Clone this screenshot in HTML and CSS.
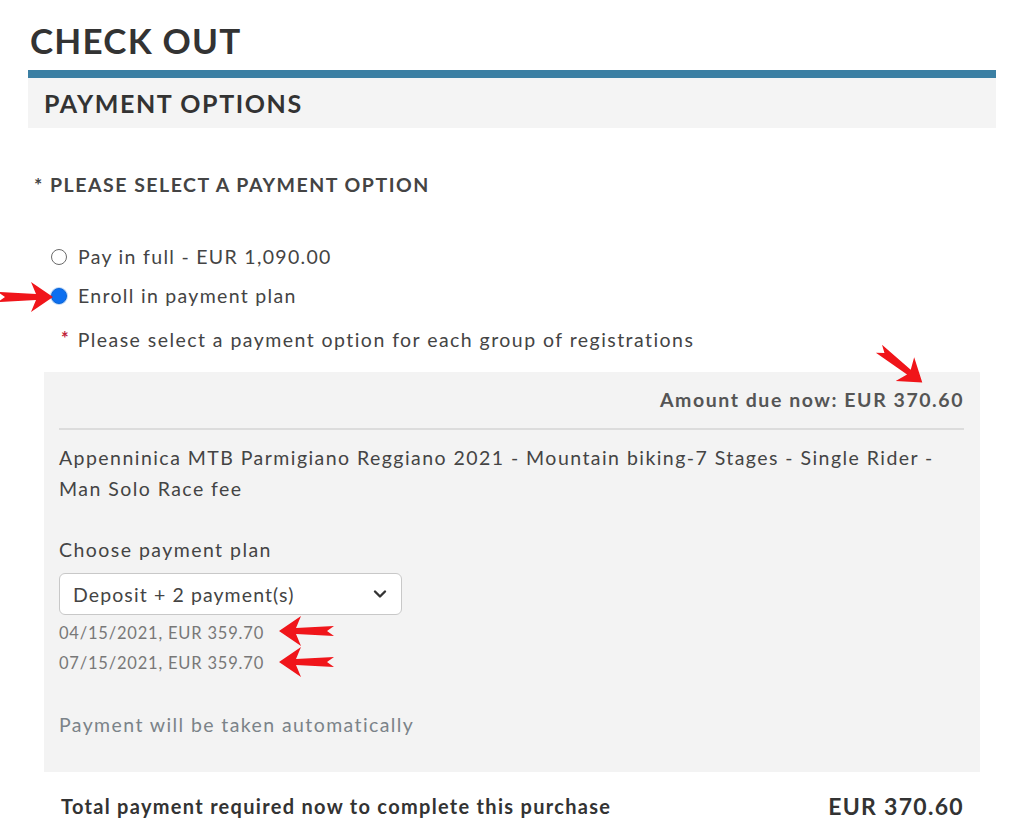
FILE: index.html
```html
<!DOCTYPE html>
<html>
<head>
<meta charset="utf-8">
<link rel="stylesheet" href="styles.css">
</head>
<body>
<div class="page">
  <h1 class="title">CHECK OUT</h1>
  <div class="section-head">PAYMENT OPTIONS</div>
  <div class="prompt">* PLEASE SELECT A PAYMENT OPTION</div>
  <div class="options">
    <label class="opt"><span class="radio"></span>Pay in full - EUR 1,090.00</label>
    <label class="opt"><span class="radio checked"></span>Enroll in payment plan</label>
    <div class="note"><span class="star">*</span>Please select a payment option for each group of registrations</div>
  </div>
  <div class="plan-box">
    <div class="due">Amount due now: EUR 370.60</div>
    <div class="desc">Appenninica MTB Parmigiano Reggiano 2021 - Mountain biking-7 Stages - Single Rider - Man Solo Race fee</div>
    <div class="choose">Choose payment plan</div>
    <div class="select">Deposit + 2 payment(s)
      <svg class="chev" width="14" height="10" viewBox="0 0 14 10"><path d="M2 2.5 L7 7.5 L12 2.5" fill="none" stroke="#333" stroke-width="2.4" stroke-linecap="round" stroke-linejoin="round"/></svg>
    </div>
    <div class="dates">
      <div>04/15/2021, EUR 359.70</div>
      <div>07/15/2021, EUR 359.70</div>
    </div>
    <div class="auto">Payment will be taken automatically</div>
  </div>
  <div class="total">
    <span class="total-label">Total payment required now to complete this purchase</span>
    <span class="total-amt">EUR 370.60</span>
  </div>
</div>

<svg class="arrow a1" width="56" height="32" viewBox="0 0 56 32"><polygon points="55,16 33,1 38,13 0,11 7,16 0,21 38,19 33,31" fill="#f0151a"/></svg>
<svg class="arrow a2" width="56" height="32" viewBox="0 0 56 32"><polygon points="55,16 33,1 38,13 0,11 7,16 0,21 38,19 33,31" fill="#f0151a"/></svg>
<svg class="arrow a3" width="56" height="32" viewBox="0 0 56 32"><polygon points="55,16 33,1 38,13 0,11 7,16 0,21 38,19 33,31" fill="#f0151a"/></svg>
<svg class="arrow a4" width="56" height="32" viewBox="0 0 56 32"><polygon points="55,16 33,1 38,13 0,11 7,16 0,21 38,19 33,31" fill="#f0151a"/></svg>
</body>
</html>
```
FILE: styles.css
```css
html, body {
  margin: 0;
  padding: 0;
  background: #fff;
}
body {
  font-family: "Lato", "Open Sans", Arial, sans-serif;
  color: #444;
  position: relative;
  width: 1024px;
  height: 832px;
  overflow: hidden;
}
.page {
  padding: 17px 28px 0 28px;
  width: 968px;
}
.title {
  margin: 0 0 0 2px;
  font-size: 35px;
  line-height: 46px;
  font-weight: 700;
  color: #333;
  letter-spacing: 1.2px;
  height: 53px;
}
.section-head {
  border-top: 8px solid #3b7fa3;
  background: #f4f4f4;
  height: 50px;
  line-height: 50px;
  padding-left: 16px;
  font-size: 25px;
  font-weight: 700;
  color: #333;
  letter-spacing: 1.6px;
}
.prompt {
  margin: 45px 0 0 6px;
  font-size: 19.5px;
  font-weight: 700;
  color: #444;
  letter-spacing: 1.5px;
  line-height: 24px;
}
.options {
  margin-top: 40px;
  padding-left: 23px;
}
.opt {
  display: flex;
  align-items: center;
  font-size: 19.5px;
  letter-spacing: 1.3px;
  line-height: 24px;
  height: 39px;
  color: #444;
}
.radio {
  width: 16px;
  height: 16px;
  flex: none;
  box-sizing: border-box;
  border: 1px solid #6a6a6a;
  border-radius: 50%;
  margin-right: 11px;
  background: #fff;
}
.radio.checked {
  border: 1px solid #0a66d8;
  background: #0d6ff0;
  box-shadow: 0 0 0 1px #bcd6f7;
}
.note {
  margin-top: 11px;
  padding-left: 10px;
  font-size: 19.5px;
  letter-spacing: 1.45px;
  line-height: 24px;
  color: #444;
}
.star {
  color: #c0223b;
  font-size: 18px;
  font-weight: 700;
  margin-right: 9px;
  vertical-align: 2px;
  letter-spacing: 0;
}
.plan-box {
  margin: 20px 16px 0 16px;
  background: #f3f3f3;
  padding: 14px 16px 0 15px;
  height: 386px;
}
.due {
  text-align: right;
  font-size: 19.5px;
  font-weight: 700;
  color: #555;
  line-height: 28px;
  padding-bottom: 14px;
  border-bottom: 2px solid #dcdcdc;
  letter-spacing: 1.55px;
}
.desc {
  margin-top: 12px;
  font-size: 19.5px;
  letter-spacing: 1.45px;
  line-height: 31px;
  color: #444;
  padding-right: 10px;
}
.choose {
  margin-top: 34px;
  font-size: 19.5px;
  letter-spacing: 1.45px;
  line-height: 24px;
  color: #444;
}
.select {
  margin-top: 11px;
  width: 343px;
  height: 42px;
  box-sizing: border-box;
  background: #fff;
  border: 1px solid #c8c8c8;
  border-radius: 6px;
  display: flex;
  align-items: center;
  justify-content: space-between;
  padding: 0 14px 0 13px;
  font-size: 19.5px;
  letter-spacing: 1.1px;
  color: #444;
}
.dates {
  margin-top: 3px;
  font-size: 16.5px;
  letter-spacing: 0.8px;
  line-height: 30px;
  color: #787878;
}
.auto {
  margin-top: 35px;
  font-size: 19.5px;
  letter-spacing: 1.4px;
  line-height: 24px;
  color: #7b8389;
}
.total {
  margin: 20px 32px 0 33px;
  display: flex;
  justify-content: space-between;
  align-items: center;
}
.total-label {
  font-size: 20px;
  font-weight: 700;
  letter-spacing: 1.3px;
  color: #333;
}
.total-amt {
  font-size: 23px;
  font-weight: 700;
  letter-spacing: 1.3px;
  color: #333;
}
.arrow {
  position: absolute;
}
.a1 { left: -2px; top: 281px; }
.a2 { left: 873px; top: 350px; transform: rotate(38deg); }
.a3 { left: 278px; top: 615px; transform: scaleX(-1); }
.a4 { left: 278px; top: 646px; transform: scaleX(-1); }
```
